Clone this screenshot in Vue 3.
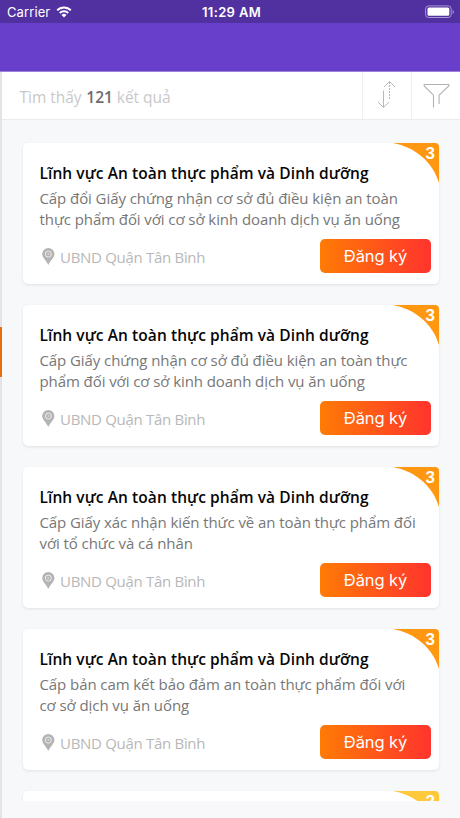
<script setup>
const title = 'Lĩnh vực An toàn thực phẩm và Dinh dưỡng'
const place = 'UBND Quận Tân Bình'
const cards = [
  { level: 3, lines: ['Cấp đổi Giấy chứng nhận cơ sở đủ điều kiện an toàn', 'thực phẩm đối với cơ sở kinh doanh dịch vụ ăn uống'] },
  { level: 3, lines: ['Cấp Giấy chứng nhận cơ sở đủ điều kiện an toàn thực', 'phẩm đối với cơ sở kinh doanh dịch vụ ăn uống'] },
  { level: 3, lines: ['Cấp Giấy xác nhận kiến thức về an toàn thực phẩm đối', 'với tổ chức và cá nhân'] },
  { level: 3, lines: ['Cấp bản cam kết bảo đảm an toàn thực phẩm đối với', 'cơ sở dịch vụ ăn uống'] },
]
</script>

<template>
  <div class="screen">
    <header class="status">
      <div class="carrier">
        <span>Carrier</span>
        <svg class="wifi" width="16" height="12" viewBox="0 0 16 12">
          <path d="M1.2 4.400a9.600 9.600 0 0 1 13.600 0M3.800 7a5.900 5.900 0 0 1 8.400 0" fill="none" stroke="#fff" stroke-width="2" />
          <path d="M5.500 9a3.600 3.600 0 0 1 5 0L8 11.500z" fill="#fff" />
        </svg>
      </div>
      <span class="time">11:29 AM</span>
      <svg class="battery" width="30" height="14" viewBox="0 0 30 14">
        <rect x=".6" y=".9" width="25.6" height="11.6" rx="3" fill="none" stroke="#a995d3" />
        <rect x="2.5" y="2.6" width="21.8" height="8.2" rx="1.5" fill="#fff" />
        <path d="M27.6 5v4q1.4-.6 1.4-2t-1.4-2z" fill="#a995d3" />
      </svg>
    </header>
    <div class="navbar"></div>
    <div class="body">
      <aside class="edge"><div class="marker"></div></aside>
      <main class="page">
        <div class="toolbar">
          <div class="found">Tìm thấy <b>121</b> kết quả</div>
          <div class="tool sort">
            <svg width="20" height="30" viewBox="0 0 20 30" fill="none" stroke="#b8b8b8">
              <path d="M6.500 10.500V27.500M1 22l5.500 5.500 5.500-5.500" />
              <path d="M7 7l5.500-5.500L18 7" />
              <path d="M12.500 2v17.500" stroke-dasharray="2 1" />
            </svg>
          </div>
          <div class="tool filter">
            <svg width="28" height="26" viewBox="0 0 28 26" fill="none" stroke="#b2b2b2" stroke-width="1.1">
              <path d="M10.500 24.500V12.200L1.200 3V1.500h24.600V3l-9.700 9.200v8.800" />
            </svg>
          </div>
        </div>
        <div class="list">
          <article v-for="(card, i) in cards" :key="i" class="card">
            <svg class="corner" width="46" height="40" viewBox="0 0 46 40">
              <path d="M0 0H42Q46 0 46 4V40C40 19 22 4 0 0z" fill="#ff9710" />
            </svg>
            <span class="level">{{ card.level }}</span>
            <h2>{{ title }}</h2>
            <p><span v-for="line in card.lines" :key="line">{{ line }}</span></p>
            <footer>
              <div class="place">
                <svg width="13" height="17" viewBox="0 0 13 17">
                  <path d="M6.300 0A6.100 6.100 0 0 0 .2 6.100C.2 9.500 4 12.500 6.300 17 8.600 12.500 12.400 9.500 12.400 6.100A6.100 6.100 0 0 0 6.300 0z" fill="#b4b4b4" />
                  <circle cx="6.300" cy="6.100" r="3" fill="#b4b4b4" stroke="#eee" stroke-width="1" />
                  <circle cx="6.300" cy="6.100" r="1" fill="#d9d9d9" />
                </svg>
                <span>{{ place }}</span>
              </div>
              <button>Đăng ký</button>
            </footer>
          </article>
          <article class="card partial">
            <svg class="corner" width="46" height="40" viewBox="0 0 46 40">
              <path d="M0 0H42Q46 0 46 4V40C40 19 22 4 0 0z" fill="#ffc93c" />
            </svg>
            <span class="level">2</span>
          </article>
        </div>
      </main>
    </div>
  </div>
</template>

<style>
body { background: #f8f8fb; overflow: hidden; }
</style>

<style scoped>
* { box-sizing: border-box; }
.screen { width: 460px; height: 818px; overflow: hidden; display: flex; flex-direction: column; font-family: "Open Sans", "Noto Sans", sans-serif; background: #f8f8fb; }
.status { height: 23px; flex: none; background: #51319f; color: #fff; display: grid; grid-template-columns: 1fr auto 1fr; align-items: center; padding: 1px 5px 0 7px; font: 13px/22px Inter, sans-serif; }
.carrier { display: flex; align-items: center; gap: 6px; letter-spacing: .1px; }
.time { font-weight: 600; letter-spacing: .35px; padding-left: 1px; }
.battery { justify-self: end; }
.navbar { height: 49px; flex: none; background: #673fca; border-bottom: 1px solid #9c84dc; }
.body { flex: 1; display: flex; min-height: 0; }
.edge { width: 2px; background: #e4e4e7; padding-top: 255px; }
.marker { height: 50px; background: #e96d09; }
.page { flex: 1; display: flex; flex-direction: column; min-width: 0; }
.toolbar { height: 48px; flex: none; background: #fff; border-bottom: 1px solid #ebebed; display: flex; }
.found { flex: 1; padding-left: 17.500px; font-size: 15.500px; line-height: 50px; color: #c8c8ca; white-space: nowrap; letter-spacing: -.03px; }
.found b { color: #6c6c6c; font-weight: 600; margin-left: .8px; }
.tool { border-left: 1px solid #efeff1; display: flex; align-items: flex-start; }
.sort { width: 49px; padding: 8px 0 0 14px; }
.filter { width: 49px; padding: 11px 0 0 11px; }
.list { height: 681px; overflow: hidden; padding: 23px 21px 0 20.500px; display: flex; flex-direction: column; gap: 21px; background: #f7f8fa; }
.card { position: relative; flex: none; height: 141px; background: #fff; border-radius: 5px; box-shadow: 0 1px 3px #00000018; padding: 18.500px 8px 0 17px; }
.corner { position: absolute; right: 0; top: 0; }
.level { position: absolute; right: 4px; top: 0; font: bold 17px/21px "Liberation Sans", sans-serif; color: #fff; }
h2 { margin: 0; font-size: 15.500px; line-height: 22px; font-weight: 600; color: #060606; white-space: nowrap; letter-spacing: .08px; }
p { margin: 4.500px 0 0; font-size: 15px; line-height: 21px; color: #777; white-space: nowrap; letter-spacing: -.08px; }
p span { display: block; }
footer { display: flex; justify-content: space-between; margin-top: 9px; }
.place { display: flex; gap: 5.500px; padding: 8px 0 0 2px; color: #b8b8b8; font-size: 15px; line-height: 20px; letter-spacing: -.3px; }
.place svg { margin-top: 1px; }
button { width: 111px; height: 34px; padding: 0; border: 0; border-radius: 5px; background: linear-gradient(90deg, #ff7b05, #ff342d); color: #fff; font: 16.500px/34px Inter, sans-serif; letter-spacing: -.1px; }
</style>
